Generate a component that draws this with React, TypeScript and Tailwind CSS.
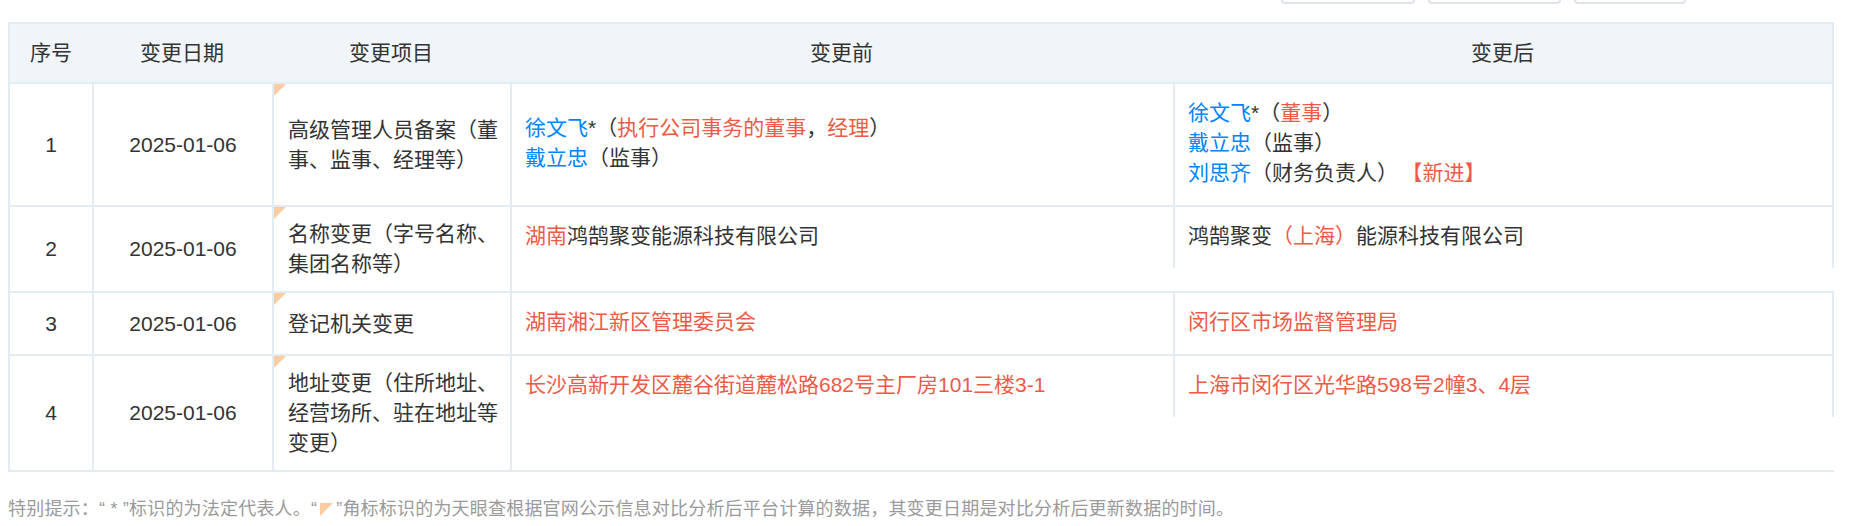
import React from "react";

const BLUE = "text-[#0084ff]";
const RED = "text-[#ee5a45]";

function Corner() {
  return (
    <svg className="absolute left-0 top-0" width="12" height="12" viewBox="0 0 12 12">
      <polygon points="0,0 12,0 0,12" fill="#f9cd9f" />
    </svg>
  );
}

type Row = {
  no: number;
  date: string;
  item: string;
  before: React.ReactNode;
  after: React.ReactNode;
  centerBefore?: boolean;
};

const rows: Row[] = [
  {
    no: 1,
    date: "2025-01-06",
    item: "高级管理人员备案（董事、监事、经理等）",
    centerBefore: true,
    before: (
      <>
        <div>
          <span className={BLUE}>徐文飞</span>*（<span className={RED}>执行公司事务的董事</span>，
          <span className={RED}>经理</span>）
        </div>
        <div>
          <span className={BLUE}>戴立忠</span>（监事）
        </div>
      </>
    ),
    after: (
      <>
        <div>
          <span className={BLUE}>徐文飞</span>*（<span className={RED}>董事</span>）
        </div>
        <div>
          <span className={BLUE}>戴立忠</span>（监事）
        </div>
        <div>
          <span className={BLUE}>刘思齐</span>（财务负责人）
          <span className={`${RED} ml-[14px]`}>【新进】</span>
        </div>
      </>
    ),
  },
  {
    no: 2,
    date: "2025-01-06",
    item: "名称变更（字号名称、集团名称等）",
    before: (
      <div>
        <span className={RED}>湖南</span>鸿鹄聚变能源科技有限公司
      </div>
    ),
    after: (
      <div>
        鸿鹄聚变<span className={RED}>（上海）</span>能源科技有限公司
      </div>
    ),
  },
  {
    no: 3,
    date: "2025-01-06",
    item: "登记机关变更",
    before: <div className={RED}>湖南湘江新区管理委员会</div>,
    after: <div className={RED}>闵行区市场监督管理局</div>,
  },
  {
    no: 4,
    date: "2025-01-06",
    item: "地址变更（住所地址、经营场所、驻在地址等变更）",
    before: <div className={RED}>长沙高新开发区麓谷街道麓松路682号主厂房101三楼3-1</div>,
    after: <div className={RED}>上海市闵行区光华路598号2幢3、4层</div>,
  },
];

export default function App() {
  return (
    <div
      className="w-[1852px] h-[526px] overflow-hidden bg-white text-[#333]"
      style={{ fontFamily: '"Liberation Sans", "Noto Sans CJK SC", sans-serif' }}
    >
      {/* toolbar buttons cut off by the top edge */}
      <div className="h-[22px]">
        <div className="flex h-[4px] items-end justify-end gap-[13px] pr-[166px]">
          <div className="h-[30px] w-[134px] shrink-0 rounded-[4px] border-2 border-[#dfe4ea]" />
          <div className="h-[30px] w-[133px] shrink-0 rounded-[4px] border-2 border-[#dfe4ea]" />
          <div className="h-[30px] w-[112px] shrink-0 rounded-[4px] border-2 border-[#dfe4ea]" />
        </div>
      </div>

      <div className="ml-[8px] w-[1826px] text-[21px] leading-[30px]">
        {/* header */}
        <div className="flex h-[62px] items-center border-2 border-[#e3ebf3] bg-[#f0f5fa]">
          <div className="w-[82px] text-center">序号</div>
          <div className="w-[180px] text-center">变更日期</div>
          <div className="w-[238px] text-center">变更项目</div>
          <div className="w-[663px] text-center">变更前</div>
          <div className="flex-1 text-center">变更后</div>
        </div>

        {rows.map((r) => (
          <div key={r.no} className="flex border-b-2 border-l-2 border-[#e3ebf3]">
            <div className="flex w-[82px] items-center justify-center">{r.no}</div>
            <div className="flex w-[180px] items-center justify-center border-l-2 border-[#e3ebf3]">
              {r.date}
            </div>
            <div className="relative flex w-[240px] items-center border-x-2 border-[#e3ebf3] py-[12px] pl-[14px] pr-[8px]">
              <Corner />
              <div>{r.item}</div>
            </div>
            <div
              className={`w-[661px] pt-[14px] pb-[17px] pl-[13px] pr-[10px] ${
                r.centerBefore ? "self-center" : "self-start"
              }`}
            >
              {r.before}
            </div>
            <div className="flex-1 self-start border-x-2 border-[#e3ebf3] pt-[14px] pb-[17px] pl-[13px] pr-[10px]">
              {r.after}
            </div>
          </div>
        ))}
      </div>

      <div className="mt-[24px] flex items-center pl-[8px] text-[18px] leading-[26px] tracking-[0.2px] text-[#9a9a9a]">
        <span>特别提示：“ * ”标识的为法定代表人。“ </span>
        <svg className="mx-[3px]" width="13" height="13" viewBox="0 0 12 12">
          <polygon points="0,0 12,0 0,12" fill="#f9cd9f" />
        </svg>
        <span> ”角标标识的为天眼查根据官网公示信息对比分析后平台计算的数据，其变更日期是对比分析后更新数据的时间。</span>
      </div>
    </div>
  );
}
